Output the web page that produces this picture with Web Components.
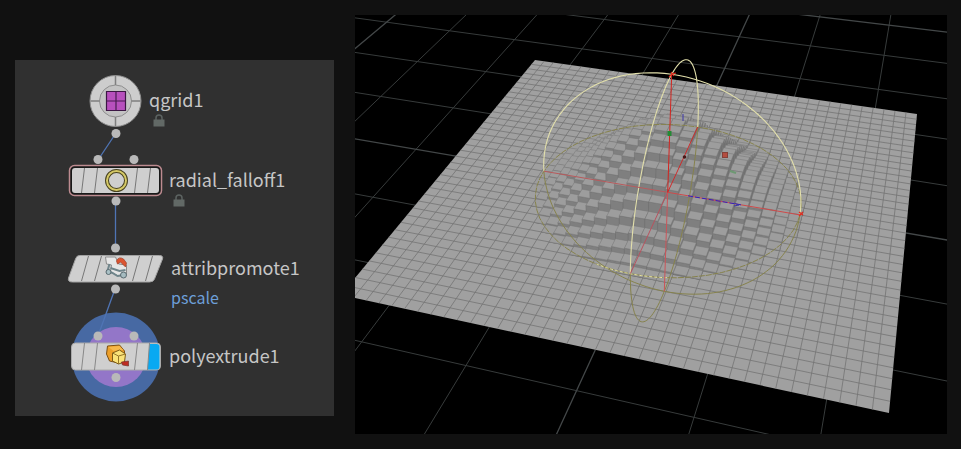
<!DOCTYPE html>
<html lang="en">
<head>
<meta charset="utf-8">
<title>Radial falloff network</title>
<style>
body { margin: 0; background: #111; }
</style>
</head>
<body>
<split-workspace>
  <node-network slot="network">
    <graph-node kind="ring" label="qgrid1" locked style="--y:41px;--label:134px"></graph-node>
    <graph-node kind="selected" label="radial_falloff1" locked style="--y:121px;--label:154px"></graph-node>
    <graph-node kind="slanted" label="attribpromote1" note="pscale" style="--y:209px;--label:156px"></graph-node>
    <graph-node kind="display" label="polyextrude1" style="--y:297px;--label:154px"></graph-node>
  </node-network>
  <scene-view slot="view"></scene-view>
</split-workspace>
<script>
class SplitWorkspace extends HTMLElement {
  connectedCallback() {
    this.attachShadow({ mode: 'open' }).innerHTML = `
      <style>
        :host { display: grid; grid-template-columns: 319fr 592fr; gap: 21px; padding: 15px 14px 15px 15px; align-items: start; }
        .side { padding-top: 45px; }
      </style>
      <div class="side"><slot name="network"></slot></div>
      <slot name="view"></slot>`;
  }
}
customElements.define('split-workspace', SplitWorkspace);

class NodeNetwork extends HTMLElement {
  connectedCallback() {
    this.attachShadow({ mode: 'open' }).innerHTML = `
      <style>
        :host { display: block; position: relative; min-height: 356px; background: #303030; }
        svg { position: absolute; left: 0; top: 0; }
      </style>
      <svg width="200" height="356" aria-hidden="true">
        <circle cx="101" cy="297" r="44.500" fill="#4769a3"/>
        <circle cx="101" cy="297" r="30" fill="#9376c8"/>
        <g stroke="#4f74b4" stroke-width="1.300" fill="none">
          <path d="M101 73 83 100M100.500 141V188M100 229 83 276"/>
        </g>
      </svg>
      <slot></slot>
      <svg width="200" height="356" aria-hidden="true">
        <g fill="#b9b9b9">
          <circle cx="101" cy="73.500" r="4.500"/><circle cx="83" cy="99.500" r="4.500"/><circle cx="119" cy="99.500" r="4.500"/>
          <circle cx="101" cy="141" r="4.500"/><circle cx="100.500" cy="188" r="4.500"/><circle cx="100.500" cy="229" r="4.500"/>
          <circle cx="83" cy="276" r="4.500"/><circle cx="119" cy="276" r="4.500"/><circle cx="101" cy="317.500" r="4.500"/>
        </g>
      </svg>`;
  }
}
customElements.define('node-network', NodeNetwork);

/* Node artwork, drawn around (0,0), the middle of the tile. */
const ART = {
  ring: `
    <circle r="25.500" fill="#cdcdcd" stroke="#8e8e8e"/>
    <circle r="16" fill="#c3c3c3" stroke="#8e8e8e"/>
    <path d="M0-25V-16M0 16V25M-25 0H-16M16 0H25" stroke="#7f7f7f" stroke-width="1.500"/>
    <path d="M-9-9.500H10V9.500H-9Z" fill="#b750bd" stroke="#3c1744" stroke-width="1.200"/>
    <path d="M.5-9V9M-9 0H10" stroke="#481d50" stroke-width="1.200"/>`,
  selected: `
    <rect x="-46" y="-15.500" width="92" height="30" rx="5" fill="#191919" stroke="#bd8b90" stroke-width="1.500"/>
    <rect x="-43.500" y="-13" width="87" height="25" rx="3" fill="#cfcfcf"/>
    <path d="M-31-13-34 12M-18-13-21 12M22-13 19 12M35-13 32 12" stroke="#777"/>
    <circle cx="1" cy="-.5" r="9.500" fill="none" stroke="#48421f" stroke-width="4"/>
    <circle cx="1" cy="-.5" r="9.500" fill="none" stroke="#d5c967" stroke-width="2"/>`,
  slanted: `
    <path d="M-36-13.500H44Q48-13.500 47-10L39 10Q38 13 34 13H-43Q-48 13-47 9L-40-10Q-39-13.500-36-13.500Z" fill="#cfcfcf" stroke="#a2a2a2"/>
    <path d="M-27-13-34 12M-14-13-21 12M24-13 17 12M37-13 30 12" stroke="#777"/>
    <path d="M-10-12H0L3-5 11-4 11 5 3 7-5 3-4-4-9-5Z" fill="#e6e6e6" stroke="#8b8b8b"/>
    <path d="M-6-5-8 2-3 4 2 7 8 6M-5-1 4 2 10 1" stroke="#70858b" stroke-width="2" fill="none"/>
    <circle cx="-7" cy="3" r="2.500" fill="#a9c0c5" stroke="#596a70"/>
    <circle cx="8" cy="6" r="3" fill="#a5bbc0" stroke="#596a70"/>
    <path d="M1-8Q3-13 8-10L11-6 10-2 7-5 5-7 2-5Z" fill="#dc5430" stroke="#a13f28" stroke-width=".7"/>`,
  display: `
    <rect x="-44" y="-14" width="89" height="27" rx="4" fill="#cfcfcf" stroke="#aaa"/>
    <path d="M34-13H41Q44-13 44-10V9Q44 12.500 41 12.500H32Z" fill="#08a9f2"/>
    <path d="M-31-14-34 13M-18-14-21 13M22-14 19 13M34-14 32 13" stroke="#888"/>
    <path d="M-8-11 4-12 9-6 9 2 3 6-6 4-9-3Z" fill="#eda02b" stroke="#7d4f12"/>
    <path d="M-7-10 4-11 8-7-2-6Z" fill="#f6b94b"/>
    <path d="M-3-4 4-7 10-3 9 5 3 7-3 4Z" fill="#fae278" stroke="#7d5b18"/>
    <path d="M-3-4 3-1 10-3M3-1V7" fill="none" stroke="#957629"/>
    <path d="M6 5 13 4V9L7 8Z" fill="#bf2c22" stroke="#77332c" stroke-width=".7"/>`
};
class GraphNode extends HTMLElement {
  connectedCallback() {
    const note = this.getAttribute('note');
    this.attachShadow({ mode: 'open' }).innerHTML = `
      <style>
        :host { display: block; position: absolute; left: 0; top: var(--y); width: 100%; height: 0; color: #c6c6c6;
          font: 18px/24px "Noto Sans CJK SC", "Noto Sans", sans-serif; }
        .art { position: absolute; left: 50px; top: -30px; }
        .text { position: absolute; left: var(--label); top: -14px; white-space: nowrap; }
        .note { color: #6d9fd8; font-size: 16px; line-height: 24px; margin-top: 6px; }
        .lock { display: block; margin: 3px 0 0 4px; }
      </style>
      <svg class="art" width="102" height="60" viewBox="-50.500 -30 102 60" aria-hidden="true">${ART[this.getAttribute('kind')]}</svg>
      <div class="text"><div>${this.getAttribute('label')}</div>
        ${note ? `<div class="note">${note}</div>` : ''}
        ${this.hasAttribute('locked') ? `<svg class="lock" width="12" height="13" aria-label="Locked"><path d="M3 6V4Q3 1 6 1T9 4V6" fill="none" stroke="#5c6361" stroke-width="1.500"/><rect x=".5" y="5.500" width="11" height="7" fill="#626966"/></svg>` : ''}
      </div>`;
  }
}
customElements.define('graph-node', GraphNode);

/* Perspective camera: the square plane spans -1..1 in x and z, with y up. */
const corners = [[535, 60], [917, 114], [889, 413], [341, 295]];
function squareToQuad([a, b, c, d]) {
  const dx1 = b[0] - c[0], dx2 = d[0] - c[0], dx3 = a[0] - b[0] + c[0] - d[0];
  const dy1 = b[1] - c[1], dy2 = d[1] - c[1], dy3 = a[1] - b[1] + c[1] - d[1];
  const det = dx1 * dy2 - dx2 * dy1;
  const g = (dx3 * dy2 - dx2 * dy3) / det, h = (dx1 * dy3 - dx3 * dy1) / det;
  return [b[0] - a[0] + g * b[0], d[0] - a[0] + h * d[0], a[0],
          b[1] - a[1] + g * b[1], d[1] - a[1] + h * d[1], a[1], g, h, 1];
}
const H = squareToQuad(corners);
const R = 0.57;
const ground = (x, z) => {
  const u = (x + 1) / 2, v = (z + 1) / 2;
  return [H[0] * u + H[1] * v + H[2], H[3] * u + H[4] * v + H[5], H[6] * u + H[7] * v + H[8]];
};
const w0 = ground(0, 0)[2];
const UP = [-55.1, -124.6, -0.088].map(n => n * w0 / R);
const hom = (x, y, z) => ground(x, z).map((n, i) => n + UP[i] * y);
const px = (x, y, z) => { const p = hom(x, y, z); return [p[0] / p[2], p[1] / p[2]]; };
const fmt = p => p[0].toFixed(1) + ' ' + p[1].toFixed(1);
const path = (pts, close) => 'M' + pts.map(fmt).join('L') + (close ? 'Z' : '');

function segment(a, b) {
  let t0 = 0, t1 = 1;
  const wa = ground(...a)[2], wb = ground(...b)[2], near = 0.12;
  if (wa < near && wb < near) return '';
  if (wa < near) t0 = (near - wa) / (wb - wa);
  if (wb < near) t1 = (near - wa) / (wb - wa);
  const at = t => px(a[0] + (b[0] - a[0]) * t, 0, a[1] + (b[1] - a[1]) * t);
  return path([at(t0), at(t1)]);
}
function floorLines() {
  let minor = '', major = '';
  for (let k = -14; k <= 14; k++) {
    const s = k * 0.4, d = segment([s, -6], [s, 6]) + segment([-6, s], [6, s]);
    if (k % 5) minor += d; else major += d;
  }
  return `<path d="${minor}" stroke="#373b3b" stroke-width="1"/><path d="${major}" stroke="#434748" stroke-width="1.300"/>`;
}
const N = 38, STEP = 2 / N;
function planeGrid() {
  let d = '';
  for (let i = 1; i < N; i++) {
    const s = -1 + i * STEP;
    d += path([px(s, 0, -1), px(s, 0, 1)]) + path([px(-1, 0, s), px(1, 0, s)]);
  }
  return `<path d="${path([px(-1, 0, -1), px(1, 0, -1), px(1, 0, 1), px(-1, 0, 1)], true)}" fill="#a0a0a0"/>
    <path d="${d}" stroke="#747474" stroke-width=".8"/>`;
}
const facing = q => {
  let a = 0;
  q.forEach((p, i) => { const n = q[(i + 1) % q.length]; a += p[0] * n[1] - n[0] * p[1]; });
  return a > 0;
};
function blocks() {
  const cells = [];
  for (let i = 0; i < N; i++) for (let j = 0; j < N; j++) {
    const x = -1 + i * STEP, z = -1 + j * STEP;
    const r = Math.hypot(x + STEP / 2, z + STEP / 2) / R;
    if (r >= 1) continue;
    const t = 1 - r;
    cells.push({ x, z, h: 0.6 * R * t * t * (3 - 2 * t), w: ground(x + STEP / 2, z + STEP / 2)[2] });
  }
  cells.sort((a, b) => b.w - a.w);
  return cells.map(({ x, z, h }) => {
    const X = x + STEP, Z = z + STEP;
    const front = [px(x, h, Z), px(X, h, Z), px(X, 0, Z), px(x, 0, Z)];
    const right = [px(X, h, Z), px(X, h, z), px(X, 0, z), px(X, 0, Z)];
    const left = [px(x, h, z), px(x, h, Z), px(x, 0, Z), px(x, 0, z)];
    const top = [px(x, h, z), px(X, h, z), px(X, h, Z), px(x, h, Z)];
    const face = (q, f, s) => facing(q) ? `<path d="${path(q, true)}" fill="${f}" stroke="${s}"/>` : '';
    return face(right, '#777', '#6c6c6c') + face(left, '#7b7b7b', '#6c6c6c') +
      face(front, '#7f7f7f', '#6e6e6e') + face(top, '#9d9d9d', '#777');
  }).join('');
}
function arc(fn, from, to) {
  const pts = [];
  for (let i = 0; i <= 60; i++) {
    const a = (from + (to - from) * i / 60) * Math.PI;
    pts.push(px(...fn(Math.cos(a) * R, Math.sin(a) * R)));
  }
  return path(pts);
}
class SceneView extends HTMLElement {
  connectedCallback() {
    const xy = (c, s) => [c, s, 0], zy = (c, s) => [0, s, c], xz = (c, s) => [c, 0, s];
    const line = (a, b) => path([px(...a), px(...b)]);
    this.attachShadow({ mode: 'open' }).innerHTML = `
      <style>
        :host { display: block; background: #000; }
        svg { display: block; width: 100%; height: auto; }
      </style>
      <svg viewBox="355 15 592 419" role="img" aria-label="Extruded grid in perspective" fill="none">
        ${floorLines()}
        ${planeGrid()}
        <g stroke-width=".5">${blocks()}</g>
        <g stroke="#86824c" stroke-width="1">
          <path d="${arc(xz, 0, 2)}" stroke-dasharray="6 1"/>
          <path d="${arc(xy, 1, 2)}"/>
          <path d="${arc(zy, 1, 2)}"/>
        </g>
        <path d="${arc(xz, .42, .58)}" stroke="#e5e2a0" stroke-dasharray="3 2"/>
        <g stroke="#e2dfab" stroke-width="1.100">
          <path d="${arc(xy, 0, 1)}"/>
          <path d="${arc(zy, 0, 1)}"/>
        </g>
        <g stroke-width="1">
          <path d="${line([-R, 0, 0], [0, 0, 0])}" stroke="#b85a5c"/>
          <path d="${line([0, 0, 0], [R, 0, 0])}" stroke="#cf4a4a"/>
          <path d="${line([0, 0, 0], [0, 0, R])}" stroke="#b8525e"/>
          <path d="${line([0, -R, 0], [0, 0, 0])}" stroke="#cb5459"/>
          <path d="${line([0, 0, 0], [0, 0, -R])}" stroke="#cf2b2b"/>
          <path d="${line([0, 0, 0], [0, R, 0])}" stroke="#d4241f"/>
          <path d="${line([0.09, 0, 0], [0.32, 0, 0])}" stroke="#2a22c4" stroke-dasharray="5 2"/>
        </g>
        <path d="M734 203 739 205 734 206M683 114V121" stroke="#3c37a8"/>
        <path d="M669 77 672 74 676 73M671 72 674 76M799 216 803 212M799 212 803 215" stroke="#e02a1e" stroke-width="1.200"/>
        <rect x="667.500" y="131" width="4" height="5" fill="#248a35"/>
        <path d="M730 171 736 173" stroke="#6d9872" stroke-width="2"/>
        <circle cx="684.500" cy="157" r="1.800" fill="#481818"/>
        <rect x="722.500" y="152.500" width="5" height="5" fill="#b44d40" stroke="#844038"/>
      </svg>`;
  }
}
customElements.define('scene-view', SceneView);
</script>
</body>
</html>
